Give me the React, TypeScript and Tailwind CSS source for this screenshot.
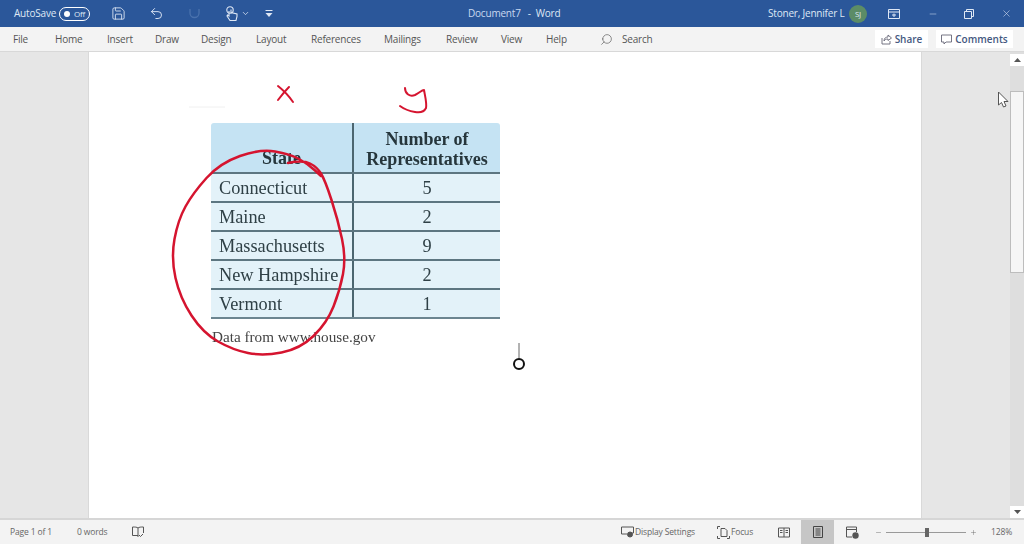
import { ChevronDown, Minus, Plus, Save, Search, Undo2, X } from "lucide-react";

const tabs = [
  { label: "File", width: "w-[42px]" },
  { label: "Home", width: "w-[52px]" },
  { label: "Insert", width: "w-[48px]" },
  { label: "Draw", width: "w-[46px]" },
  { label: "Design", width: "w-[55px]" },
  { label: "Layout", width: "w-[55px]" },
  { label: "References", width: "w-[73px]" },
  { label: "Mailings", width: "w-[62px]" },
  { label: "Review", width: "w-[55px]" },
  { label: "View", width: "w-[45px]" },
  { label: "Help", width: "w-[22px]" },
];

const rows = [
  ["Connecticut", "5"],
  ["Maine", "2"],
  ["Massachusetts", "9"],
  ["New Hampshire", "2"],
  ["Vermont", "1"],
];

// pen stroke around the state names, traced through the reference
const circle = [
  [288, 163], [303, 160], [317, 167], [325, 180], [338, 220], [346, 258], [340, 290], [327, 323], [300, 349],
  [263, 356], [233, 350], [203, 333], [180, 298], [171, 258], [178, 220], [193, 193], [220, 163], [260, 149],
  [290, 154], [308, 164], [321, 176],
];

function smooth(points: number[][]) {
  let d = `M${points[0][0]} ${points[0][1]}`;
  for (let i = 1; i < points.length - 1; i++) {
    const mx = (points[i][0] + points[i + 1][0]) / 2;
    const my = (points[i][1] + points[i + 1][1]) / 2;
    d += `Q${points[i][0]} ${points[i][1]} ${mx} ${my}`;
  }
  const last = points[points.length - 1];
  return d + `L${last[0]} ${last[1]}`;
}

function App() {
  return (
    <div className="relative flex h-[544px] w-[1024px] flex-col overflow-hidden bg-[#e6e6e6] font-['Open_Sans',sans-serif] text-[#444]">
      {/* title bar */}
      <div className="flex h-[27px] shrink-0 items-center bg-[#2b579a] pr-[12px] text-[10px] tracking-[-0.2px] text-[#dfe8f5]">
        <span className="ml-[14px] w-[41px] whitespace-nowrap">AutoSave</span>
        <div className="ml-[4px] flex h-[14px] w-[31px] items-center gap-[4px] rounded-full border border-white pl-[4px]">
          <span className="h-[6px] w-[6px] rounded-full bg-white" />
          <span className="text-[8px] leading-none">Off</span>
        </div>
        <Save className="ml-[21px]" size={15} strokeWidth={1.4} />
        <Undo2 className="ml-[23px]" size={15} strokeWidth={1.5} />
        <svg className="ml-[23px]" width="15" height="15" viewBox="0 0 15 15" fill="none" stroke="#4a72ad" strokeWidth="1.3">
          <path d="M3 3v4a4.5 4.5 0 1 0 9 0V3" />
        </svg>
        <svg className="ml-[23px]" width="14" height="16" viewBox="0 0 14 16" fill="none" stroke="currentColor" strokeWidth="1.1">
          <circle cx="5" cy="4" r="3.2" />
          <path d="M4 5v5L2.5 9 2 10l3 4.5h6l1-4V8L6 6.5V3.5" />
        </svg>
        <ChevronDown className="ml-[2px]" size={9} strokeWidth={2} />
        <svg className="ml-[15px]" width="8" height="9" viewBox="0 0 8 9" fill="currentColor">
          <path d="M0.5 1h7v1h-7zM0.5 4h7L4 8z" />
        </svg>
        <span className="ml-[195px] text-[#c9d9f0]">Document7</span>
        <span className="ml-[7px]">-</span>
        <span className="ml-[5px]">Word</span>
        <span className="ml-auto w-[72px] whitespace-nowrap">Stoner, Jennifer L</span>
        <div className="ml-[9px] flex h-[18px] w-[18px] items-center justify-center rounded-full bg-[#5c8c66] text-[8px]">SJ</div>
        <svg className="ml-[21px]" width="12" height="10" viewBox="0 0 12 10" fill="none" stroke="currentColor">
          <path d="M0.5 0.5h11v9h-11zM0.5 3h11M6 4.5v3.5M4 6h4" />
        </svg>
        <Minus className="ml-[28px]" size={10} strokeWidth={1.2} />
        <svg className="ml-[26px]" width="10" height="10" viewBox="0 0 10 10" fill="none" stroke="currentColor">
          <path d="M0.5 2.5h7v7h-7zM2.5 2.5v-2h7v7h-2" />
        </svg>
        <X className="ml-[27px]" size={11} strokeWidth={1.2} />
      </div>

      {/* ribbon tabs */}
      <div className="flex h-[25px] shrink-0 items-center border-b border-[#d8d8d8] bg-[#f3f3f3] pl-[13px] pr-[11px] text-[10px] tracking-[-0.2px] text-[#555]">
        <div className="flex w-[555px] items-center">
          {tabs.map((t) => (
            <span key={t.label} className={t.width}>{t.label}</span>
          ))}
        </div>
        <Search className="ml-[32px] -scale-x-100" size={13} strokeWidth={1.2} />
        <span className="ml-[9px]">Search</span>
        <button className="ml-auto flex h-[18px] w-[53px] items-center justify-center gap-[3px] bg-white text-[10px] font-semibold tracking-normal text-[#44587f]">
          <svg width="11" height="11" viewBox="0 0 11 11" fill="none" stroke="#667" strokeWidth="0.9">
            <path d="M1 4v6h8V7M3 7c0-3 2-4 4-4V1l3.500 3L7 6.500V5C5 5 4 5.500 3 7z" />
          </svg>
          Share
        </button>
        <button className="ml-[8px] flex h-[18px] w-[77px] items-center justify-center gap-[3px] bg-white text-[10px] font-semibold tracking-normal text-[#44587f]">
          <svg width="11" height="11" viewBox="0 0 11 11" fill="none" stroke="#667" strokeWidth="0.9">
            <path d="M0.5 1h10v7H5L3 10V8H0.500z" />
          </svg>
          Comments
        </button>
      </div>

      {/* document area */}
      <div className="flex min-h-0 flex-1">
        <div className="w-[89px] shrink-0 border-r border-[#d9d9d9]" />
        <div className="w-[832px] shrink-0 bg-white pl-[122px] pt-[71px]">
          <div className="w-[289px] font-['Liberation_Serif',serif] text-[18.3px] leading-none text-[#2f4046] blur-[0.4px]">
            <div className="grid grid-cols-[143px_146px] rounded-t-[3px] bg-[#c5e3f3] text-[#26363c]">
              <div className="flex h-[49px] items-end justify-center border-r-2 border-[#4c6670] pb-[5px] text-[18px] font-bold">State</div>
              <div className="flex h-[49px] flex-col items-center justify-end pb-[3px] text-[18px] font-bold leading-[20px]">
                <span>Number of</span>
                <span>Representatives</span>
              </div>
            </div>
            {rows.map(([state, n]) => (
              <div key={state} className="grid h-[29px] grid-cols-[143px_146px] border-t-2 border-[#5d7681] bg-[#e3f2f9]">
                <div className="flex items-center border-r-2 border-[#4c6670] pl-[8px] pt-[2px]">{state}</div>
                <div className="flex items-center justify-center pt-[2px]">{n}</div>
              </div>
            ))}
            <div className="h-[2px] bg-[#6c8590]" />
            <p className="pl-[1px] pt-[10px] text-[15.2px] text-[#444]">Data from www.house.gov</p>
          </div>
        </div>

        {/* right gutter and scrollbar */}
        <div className="flex flex-1 justify-end border-l border-[#d9d9d9]">
          <div className="flex w-[14px] flex-col bg-[#dedede]">
            <div className="mt-[2px] flex h-[12px] items-center justify-center bg-white text-[#555]">
              <svg width="7" height="4" viewBox="0 0 7 4" fill="currentColor">
                <path d="M3.500 0L7 4H0z" />
              </svg>
            </div>
            <div className="h-[25px]" />
            <div className="h-[182px] border border-[#bdbdbd] bg-[#f6f6f6]" />
            <div className="flex-1" />
            <div className="flex h-[12px] items-center justify-center bg-white text-[#555]">
              <svg width="7" height="4" viewBox="0 0 7 4" fill="currentColor">
                <path d="M0 0h7L3.500 4z" />
              </svg>
            </div>
          </div>
        </div>
      </div>

      {/* status bar */}
      <div className="flex h-[26px] shrink-0 items-center border-t-2 border-[#d6d6d6] bg-[#f3f3f3] pl-[10px] text-[8.5px] tracking-[-0.15px] text-[#666]">
        <span className="w-[41px] whitespace-nowrap">Page 1 of 1</span>
        <span className="ml-[26px] w-[30px] whitespace-nowrap">0 words</span>
        <svg className="ml-[25px]" width="12" height="12" viewBox="0 0 12 12" fill="none" stroke="#555">
          <path d="M6 2v9M6 2C5 1 3 1 0.500 1v8.500H6M6 2c1-1 3-1 5.500-1v6M7 9l1.500 1.500L11 8" />
        </svg>
        <svg className="ml-[477px]" width="14" height="12" viewBox="0 0 14 12" fill="none" stroke="#555">
          <path d="M0.500 1h12v6H7M0.500 1v7H6" />
          <circle cx="9" cy="8.500" r="2.500" fill="#555" />
        </svg>
        <span className="w-[59px] whitespace-nowrap">Display Settings</span>
        <svg className="ml-[23px]" width="13" height="13" viewBox="0 0 13 13" fill="none" stroke="#555">
          <path d="M4 2.500h4l2 2v6H4zM0.500 3V0.500H3M12.500 10v2.500H10M0.500 10v2.500H3" />
        </svg>
        <span className="ml-[1px] w-[21px]">Focus</span>
        <svg className="ml-[26px]" width="12" height="11" viewBox="0 0 12 11" fill="none" stroke="#555">
          <path d="M0.500 1h11v9h-11zM6 1v9M2 3.500h2.500M2 5.500h2.500M7.500 3.500H10M7.500 5.500H10" />
        </svg>
        <div className="ml-[11px] flex h-[24px] w-[33px] items-center justify-center bg-[#c6c6c6]">
          <svg width="10" height="12" viewBox="0 0 10 12" fill="none" stroke="#444">
            <path d="M0.500 0.500h9v11h-9zM2.500 3h5M2.500 5h5M2.500 7h5M2.500 9h5" />
          </svg>
        </div>
        <svg className="ml-[12px]" width="13" height="13" viewBox="0 0 13 13" fill="none" stroke="#555">
          <path d="M0.500 1h10v5M0.500 1v10H6M0.500 3.500h10" />
          <circle cx="9.500" cy="9.500" r="3.200" fill="#555" stroke="none" />
        </svg>
        <Minus className="ml-[16px]" size={7} strokeWidth={1.5} />
        <div className="relative ml-[4px] flex h-[12px] w-[80px] items-center">
          <div className="h-px w-full bg-[#999]" />
          <div className="absolute left-[39px] h-[9px] w-[4px] bg-[#666]" />
        </div>
        <Plus className="ml-[4px]" size={7} strokeWidth={1.5} />
        <span className="ml-[14px] whitespace-nowrap">128%</span>
      </div>

      {/* pen ink, pen marker and mouse pointer lie over the page */}
      <svg className="pointer-events-none absolute left-0 top-0" width="1024" height="544" fill="none">
        <path d="M189 107h36" stroke="#f0f0f0" strokeWidth="1" />
        <g stroke="#d5142f" strokeLinecap="round" strokeLinejoin="round">
          <path d="M278 86c5 4 11 10 15 16M289 87c-4 4-8 9-11 13" strokeWidth="2" />
          <path d="M405 88c0 6 5 9 10 7 4-2 7-5 9-5 1 6 3 13 2 18-2 4-6 5-11 4-6-1-11-3-15-6" strokeWidth="2" />
          <path d={smooth(circle)} strokeWidth="2.500" />
        </g>
        <path d="M519 343v15" stroke="#666" strokeWidth="1" />
        <circle cx="519" cy="364" r="5" stroke="#111" strokeWidth="2" fill="#fff" />
        <path d="M998.500 92v13l3-2.500 2 4.500 2.500-1-2-4.500h4z" fill="#fff" stroke="#555" strokeWidth="1" />
      </svg>
    </div>
  );
}

export default App;
